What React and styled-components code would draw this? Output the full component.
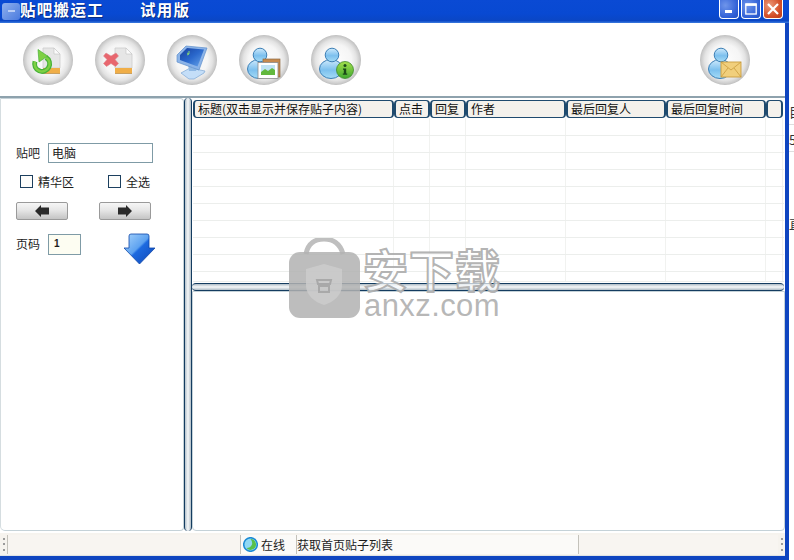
import React from 'react';
import styled, { createGlobalStyle } from 'styled-components';

const Global = createGlobalStyle`
  html, body { margin: 0; padding: 0; background: #fff; }
  body { font: 12px "Noto Sans CJK SC", "Liberation Sans", sans-serif; color: #1c1c1c; }
`;
const Page = styled.div`
  position: relative; width: 794px; height: 560px; overflow: hidden; display: flex; background: #fff;
`;
const Win = styled.div`
  width: 789px; height: 560px; flex: none; display: flex; flex-direction: column;
  background: #0f45c0; padding: 0 4px 4px 0; box-sizing: border-box;
`;
const Gutter = styled.div`
  flex: 1; overflow: hidden; display: flex; flex-direction: column; padding-top: 104px;
  font-size: 13px; line-height: 16px; color: #333;
`;
const GutterGlyph = styled.div`
  height: ${p => p.$h}px; box-sizing: border-box; width: 14px; margin-top: ${p => p.$gap}px; white-space: nowrap;
  border-bottom: ${p => p.$line ? '1px solid #dedede' : 'none'};
`;
const TitleBar = styled.div`
  height: 23px; flex: none; margin-right: -4px; display: flex; align-items: center; padding: 0 6px 0 2px;
  background: linear-gradient(#0a4ad4 0, #0849d2 60%, #0a46c4 90%, #3c7ce0 100%);
  color: #fff; font-weight: 700; font-size: 15.5px; text-shadow: 1px 1px 0 #0a2d80;
`;
const AppIcon = styled.div`
  width: 18px; height: 17px; border-radius: 3px; flex: none; display: flex; align-items: center; justify-content: center;
  background: linear-gradient(135deg, #8fb0ee, #4a7ade); margin-top: -1px;
  &::after { content: ""; width: 7px; height: 2px; background: #b9cdf5; }
`;
const TitleText = styled.span`
  margin-left: ${p => p.$left}px; letter-spacing: 1.3px; line-height: 20px; margin-top: -6px;
`;
const Spacer = styled.div` flex: 1; `;
const WinButton = styled.div`
  width: 20px; height: 19px; margin-left: 2px; margin-top: -4px; box-sizing: border-box;
  border: 1px solid #fff; border-top: none; border-radius: 0 0 4px 4px;
  display: flex; align-items: center; justify-content: center;
  background: ${p => p.$close
    ? 'radial-gradient(circle at 30% 30%, #ec9a7a, #d4502a 60%, #b83a18)'
    : 'radial-gradient(circle at 30% 30%, #6f95ea, #2f5fd6 70%, #2350c0)'};
`;
const Toolbar = styled.div`
  flex: none; background: #fff; display: flex; align-items: center; gap: 22px;
  padding: 1px 35px 0 23px; border-bottom: 2px solid #8ea2ad; height: 72px;
`;
const ToolEnd = styled.div` margin-left: auto; display: flex; `;
const Bubble = styled.div`
  width: 50px; height: 50px; border-radius: 50%; flex: none; overflow: hidden;
  background: radial-gradient(circle closest-side at 50% 50%, #fdfdfd 0, #f5f5f5 62%, #e3e3e3 82%, #c8c8c8 96%, #bcbcbc 100%);
  svg { display: block; }
`;
const Main = styled.div`
  flex: 1; min-height: 0; display: flex; background: #fff;
`;
const LeftPanel = styled.div`
  width: 184px; flex: none; box-sizing: border-box; background: #fff;
  border: 1px solid #c5d2d8; border-left: 1px solid #d5dde0; border-radius: 0 4px 4px 5px;
  padding: 44px 0 0 15px; display: flex; flex-direction: column;
`;
const VSplit = styled.div`
  width: 8px; flex: none; box-sizing: border-box; border: 1px solid #143c60; border-width: 0 1px;
  border-radius: 4px; background: linear-gradient(90deg, #b4c2cc, #f6f8f9 50%, #aebcc6);
`;
const RightCol = styled.div`
  flex: 1; min-width: 0; display: flex; flex-direction: column;
`;
const GridPane = styled.div`
  height: 185px; flex: none; padding: 2px 1px 0 1px; box-sizing: border-box; background: #fff; overflow: hidden;
`;
const cols = '201px 36px 36px 100px 100px 100px 17px';
const HeaderRow = styled.div`
  display: grid; grid-template-columns: ${cols}; height: 18px;
`;
const HeaderCell = styled.div`
  box-sizing: border-box; background: #f4f1ec; border: 1px solid #1f4a6e; border-radius: 4px;
  border-width: 1px 2px; padding-left: 3px; line-height: 15px; white-space: nowrap; overflow: hidden;
  color: #111;
`;
const GridRow = styled.div`
  display: grid; grid-template-columns: ${cols}; height: ${p => p.$h}px; box-sizing: border-box;
  border-bottom: 1px solid #eceeec;
`;
const GridCell = styled.div` border-right: 1px solid #f1f2f0; `;
const HSplit = styled.div`
  height: 8px; flex: none; box-sizing: border-box; border: 1px solid #143c60; border-width: 1px 0;
  border-radius: 4px; background: linear-gradient(#aebcc6, #f6f8f9 50%, #aebcc6); margin: 0 1px 0 0;
`;
const Detail = styled.div`
  flex: 1; background: #fff; border: 1px solid #c5d2d8; border-radius: 0 0 4px 4px; box-sizing: border-box;
`;
const FormRow = styled.div`
  display: flex; align-items: ${p => p.$align || 'center'}; height: ${p => p.$h}px; margin-top: ${p => p.$mt || 0}px;
`;
const Label = styled.label` width: 32px; flex: none; font-size: 12px; line-height: 20px; `;
const Input = styled.div`
  width: ${p => p.$w}px; height: ${p => p.$h}px; box-sizing: border-box; border: 1px solid #7f9ba6;
  padding-left: ${p => p.$small ? 5 : 3}px; line-height: ${p => p.$h - 3}px; font-size: ${p => p.$small ? 10 : 12}px;
  font-weight: ${p => p.$small ? 700 : 400};
  background: ${p => p.$small ? '#fdfdf2' : '#fff'}; font-family: ${p => p.$small ? '"Liberation Sans"' : 'inherit'};
`;
const CheckWrap = styled.div`
  display: flex; align-items: center; gap: 5px; margin-left: ${p => p.$ml}px; margin-top: ${p => p.$mt || 0}px;
`;
const CheckBox = styled.span`
  width: 13px; height: 13px; box-sizing: border-box; border: 1px solid #1c3f5e; background: #fdfdfb; display: block;
`;
const NavButton = styled.div`
  width: 52px; height: 18px; box-sizing: border-box; border: 1px solid #9a9a9a; border-radius: 2px;
  background: linear-gradient(#f6f6f6, #e6e6e6 45%, #c4c4c4);
  display: flex; align-items: center; justify-content: center; margin-right: ${p => p.$mr || 0}px;
`;
const Status = styled.div`
  height: 25px; flex: none; display: flex; background: #f6f3ee; box-sizing: border-box;
  border-top: 2px solid #fff; border-bottom: 1px solid #dfe3e6; padding: 2px 0 1px 0;
`;
const Grip = styled.div`
  width: 7px; flex: none; display: flex; flex-direction: column; justify-content: space-around; align-items: center; padding: 1px 0;
  span { width: 2px; height: 2px; background: #9a9a9a; display: block; }
`;
const StatusCell = styled.div`
  width: ${p => p.$w}px; flex: ${p => p.$w ? 'none' : 1}; box-sizing: border-box; display: flex; align-items: center; gap: 3px;
  border-left: 1px solid #c4c2bb; padding-left: ${p => p.$pad || 0}px; line-height: 18px; white-space: nowrap;
  background: ${p => p.$plain ? '#f8f5f1' : '#fbfaf8'};
`;
const Watermark = styled.div`
  position: absolute; left: 289px; top: 238px; display: flex; gap: 3px; pointer-events: none;
`;
const WmText = styled.div`
  display: flex; flex-direction: column; align-items: center; margin-top: 8px;
`;
const WmCn = styled.div`
  font-weight: 700; font-size: 45px; line-height: 46px; letter-spacing: 1px;
  color: rgba(255,255,255,.7); -webkit-text-stroke: 2px rgba(170,170,170,.9);
`;
const WmEn = styled.div`
  font-family: "Liberation Sans", sans-serif; font-size: 31px; line-height: 28px; color: rgba(170,170,170,.85);
  letter-spacing: .4px;
`;

const Page1 = () => (
  <g>
    <path d="M20 13h11l6 6v14H20z" fill="#e6e6e6" stroke="#cdcdcd" strokeWidth=".8" />
    <path d="M31 13l6 6h-6z" fill="#fbfbfb" stroke="#c4c4c4" strokeWidth=".6" />
    <rect x="20" y="33" width="17" height="5" fill="#f0ae48" />
    <rect x="20" y="38" width="17" height="1" fill="#c9a060" />
  </g>
);
const Person = () => (
  <g>
    <ellipse cx="20" cy="34" rx="11.5" ry="9.5" fill="url(#pb)" stroke="#3c7fb5" strokeWidth="1" />
    <circle cx="21" cy="20" r="6.8" fill="url(#pb)" stroke="#3c7fb5" strokeWidth="1" />
  </g>
);
const Defs = () => (
  <defs>
    <linearGradient id="pb" x1="0" y1="0" x2="0" y2="1">
      <stop offset="0" stopColor="#cfeafc" /><stop offset=".55" stopColor="#7cc0ee" /><stop offset="1" stopColor="#a6dcf6" />
    </linearGradient>
    <linearGradient id="gr" x1="0" y1="0" x2="0" y2="1">
      <stop offset="0" stopColor="#a4e04c" /><stop offset="1" stopColor="#3fa830" />
    </linearGradient>
    <linearGradient id="sc" x1="0" y1="0" x2="1" y2="1">
      <stop offset="0" stopColor="#163f9c" /><stop offset=".5" stopColor="#2a68cc" /><stop offset="1" stopColor="#6aa6ea" />
    </linearGradient>
    <linearGradient id="da" x1="0" y1="0" x2="1" y2="1">
      <stop offset="0" stopColor="#a8d4fc" /><stop offset=".45" stopColor="#5da2f0" /><stop offset=".5" stopColor="#1d6ae0" /><stop offset="1" stopColor="#0e46b4" />
    </linearGradient>
  </defs>
);
const Refresh = () => (
  <svg width="50" height="50"><Defs /><Page1 />
    <path d="M23 22.500a7.500 7.500 0 1 1-11 4" fill="none" stroke="#47b238" strokeWidth="5" />
    <path d="M23 22.500a7.500 7.500 0 1 1-11 4" fill="none" stroke="#7ed044" strokeWidth="2.400" />
    <path d="M15 14.500l9.500 6.500-8.500 6z" fill="#7ed044" stroke="#47b238" strokeWidth=".7" />
  </svg>
);
const Remove = () => (
  <svg width="50" height="50"><Defs /><Page1 />
    <path d="M11 18l5 3 5-3 2.500 3-3.500 3.500 3.500 4-3 3-4.500-3-4.500 3-3-3 3.500-4-3.500-3.500z" fill="#e8666e" stroke="#de8a8e" strokeWidth=".6" />
  </svg>
);
const Monitor = () => (
  <svg width="50" height="50"><Defs />
    <path d="M14 38l9-5 15 3-1 2-10 6h-5z" fill="#c4def8" stroke="#7ea8d4" strokeWidth=".7" />
    <path d="M21 29l5 4 5-3-2 6h-7z" fill="#8fb8e4" />
    <path d="M10 20l9-9 21 2-8 22-22-8z" fill="#8cb4e8" stroke="#5f8fcc" strokeWidth=".7" />
    <path d="M13 20l7-7 17 1.500-6.500 17-17.500-6.500z" fill="url(#sc)" />
    <path d="M20 18l2 1-2 1M22 16v3" stroke="#8fe070" strokeWidth=".9" fill="none" />
  </svg>
);
const UserPhoto = () => (
  <svg width="50" height="50"><Defs /><Person />
    <rect x="24" y="24" width="17" height="18" fill="#c78a4e" stroke="#8f6a44" strokeWidth=".7" />
    <rect x="19" y="27.500" width="20" height="16" fill="#fff" stroke="#8a8a8a" strokeWidth=".8" />
    <rect x="22" y="30" width="14" height="10" fill="#bfe3f5" />
    <path d="M22 40v-3l4-3 3 2 4-3 3 2v5z" fill="#62b83e" />
  </svg>
);
const UserInfo = () => (
  <svg width="50" height="50"><Defs /><Person />
    <circle cx="34" cy="35" r="8.500" fill="url(#gr)" stroke="#3f8a2c" strokeWidth=".8" />
    <circle cx="34" cy="30.500" r="1.500" fill="#1a4a18" />
    <path d="M32 33.500h3.200v5h1v1.200h-4.400v-1.200h1v-3.800h-.8z" fill="#1a4a18" />
  </svg>
);
const UserMail = () => (
  <svg width="50" height="50"><Defs /><Person />
    <rect x="21" y="27" width="20" height="15" fill="#f1cf7c" stroke="#c99c3e" strokeWidth=".9" />
    <path d="M21 27l10 8 10-8M21 42l7-9M41 42l-7-9" fill="none" stroke="#c99c3e" strokeWidth=".8" />
  </svg>
);
const LeftArrow = () => (
  <svg width="14" height="12" viewBox="0 0 14 12"><path d="M0 6L6 0v2.500h8v7H6V12z" fill="#2a2a2a" /></svg>
);
const RightArrow = () => (
  <svg width="14" height="12" viewBox="0 0 14 12"><path d="M14 6L8 0v2.500H0v7h8V12z" fill="#2a2a2a" /></svg>
);
const DownArrow = () => (
  <svg width="32" height="32" viewBox="0 0 32 32"><Defs />
    <path d="M7 1h16a2 2 0 0 1 2 2v12h6L15.500 31 0 15h5V3a2 2 0 0 1 2-2z" fill="url(#da)" stroke="#1048a8" strokeWidth=".8" />
  </svg>
);
const Online = () => (
  <svg width="15" height="15" viewBox="0 0 15 15">
    <circle cx="7.500" cy="7.500" r="6.800" fill="#8fd8f4" stroke="#1a8ad4" strokeWidth="1.500" />
    <path d="M7.500 2a5.500 5.500 0 0 1 3 10.100A6 6 0 0 1 3.500 11 6 6 0 0 0 9 7.500 6 6 0 0 0 7.500 2z" fill="#58c04c" />
  </svg>
);
const WmLogo = () => (
  <svg width="71" height="80" viewBox="0 0 71 80">
    <path d="M17 16C19 5 27 1 35 1s16 4 19 15" fill="none" stroke="rgba(180,180,180,.85)" strokeWidth="5" />
    <rect x="0" y="14" width="71" height="66" rx="11" fill="rgba(178,178,178,.85)" />
    <path d="M35 26l18 5v16c0 11-9 17-18 20-9-3-18-9-18-20V31z" fill="rgba(205,205,205,.8)" />
    <path d="M28 42h14l-1 4h-12zM30 48h10v6H30z" fill="none" stroke="rgba(165,165,165,.9)" strokeWidth="2" />
  </svg>
);

const columns = ['标题(双击显示并保存贴子内容)', '点击', '回复', '作者', '最后回复人', '最后回复时间', ''];
const rowHeights = [18, 17, 17, 17, 17, 17, 17, 17, 17, 10];

export default function App() {
  return (
    <Page>
      <Global />
      <Win>
        <TitleBar>
          <AppIcon />
          <TitleText $left={0}>贴吧搬运工</TitleText>
          <TitleText $left={36}>试用版</TitleText>
          <Spacer />
          <WinButton>
            <svg width="10" height="10"><rect x="1" y="6" width="7" height="3" fill="#fff" /></svg>
          </WinButton>
          <WinButton>
            <svg width="12" height="12"><rect x=".8" y="1" width="10.400" height="10" fill="none" stroke="#fff" strokeWidth="1.300" /><rect x=".5" y=".5" width="11" height="2.400" fill="#fff" /></svg>
          </WinButton>
          <WinButton $close>
            <svg width="12" height="12"><path d="M1 1l10 10M11 1L1 11" stroke="#fff" strokeWidth="2.200" /></svg>
          </WinButton>
        </TitleBar>
        <Toolbar>
          <Bubble><Refresh /></Bubble>
          <Bubble><Remove /></Bubble>
          <Bubble><Monitor /></Bubble>
          <Bubble><UserPhoto /></Bubble>
          <Bubble><UserInfo /></Bubble>
          <ToolEnd><Bubble><UserMail /></Bubble></ToolEnd>
        </Toolbar>
        <Main>
          <LeftPanel>
            <FormRow $h={20}>
              <Label>贴吧</Label>
              <Input $w={105} $h={20}>电脑</Input>
            </FormRow>
            <FormRow $h={16} $mt={10}>
              <CheckWrap $ml={4}><CheckBox />精华区</CheckWrap>
              <CheckWrap $ml={34}><CheckBox />全选</CheckWrap>
            </FormRow>
            <FormRow $h={18} $mt={13}>
              <NavButton $mr={31}><LeftArrow /></NavButton>
              <NavButton><RightArrow /></NavButton>
            </FormRow>
            <FormRow $h={32} $mt={14} $align="flex-start">
              <Label>页码</Label>
              <Input $w={33} $h={21} $small>1</Input>
              <CheckWrap $ml={43} $mt={-1}><DownArrow /></CheckWrap>
            </FormRow>
          </LeftPanel>
          <VSplit />
          <RightCol>
            <GridPane>
              <HeaderRow>
                {columns.map((c, i) => <HeaderCell key={i}>{c}</HeaderCell>)}
              </HeaderRow>
              {rowHeights.map((h, r) => (
                <GridRow key={r} $h={h}>
                  {columns.map((_, i) => <GridCell key={i} />)}
                </GridRow>
              ))}
            </GridPane>
            <HSplit />
            <Detail />
          </RightCol>
        </Main>
        <Status>
          <Grip><span /><span /><span /></Grip>
          <StatusCell $w={233} $plain />
          <StatusCell $w={56} $pad={2}><Online />在线</StatusCell>
          <StatusCell $w={282}>获取首页贴子列表</StatusCell>
          <StatusCell $plain />
          <Grip><span /><span /><span /></Grip>
        </Status>
      </Win>
      <Gutter>
        <GutterGlyph $gap={0} $h={21} $line>目</GutterGlyph>
        <GutterGlyph $gap={7} $h={20} $line>5</GutterGlyph>
        <GutterGlyph $gap={64} $h={16}>直</GutterGlyph>
      </Gutter>
      <Watermark>
        <WmLogo />
        <WmText>
          <WmCn>安下载</WmCn>
          <WmEn>anxz.com</WmEn>
        </WmText>
      </Watermark>
    </Page>
  );
}
